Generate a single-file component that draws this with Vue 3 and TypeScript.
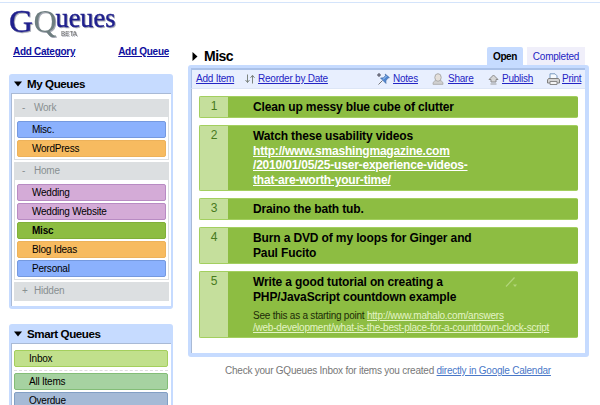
<script setup lang="ts">
interface Queue { name: string; tone: string; active?: boolean }
interface Category { name: string; open: boolean; queues: Queue[] }
interface Item { lines: string[]; link?: string[]; note?: string; noteLink?: string[] }

const categories: Category[] = [
  { name: 'Work', open: true, queues: [
    { name: 'Misc.', tone: 'blue' },
    { name: 'WordPress', tone: 'orange' },
  ] },
  { name: 'Home', open: true, queues: [
    { name: 'Wedding', tone: 'purple' },
    { name: 'Wedding Website', tone: 'purple' },
    { name: 'Misc', tone: 'green', active: true },
    { name: 'Blog Ideas', tone: 'orange' },
    { name: 'Personal', tone: 'blue' },
  ] },
  { name: 'Hidden', open: false, queues: [] },
]

const items: Item[] = [
  { lines: ['Clean up messy blue cube of clutter'] },
  { lines: ['Watch these usability videos'], link: ['http://www.smashingmagazine.com', '/2010/01/05/25-user-experience-videos-', 'that-are-worth-your-time/'] },
  { lines: ['Draino the bath tub.'] },
  { lines: ['Burn a DVD of my loops for Ginger and', 'Paul Fucito'] },
  { lines: ['Write a good tutorial on creating a', 'PHP/JavaScript countdown example'], note: 'See this as a starting point', noteLink: ['http://www.mahalo.com/answers', '/web-development/what-is-the-best-place-for-a-countdown-clock-script'] },
]
</script>

<template>
  <div class="page">
    <aside class="side">
      <svg class="logo" width="120" height="38" viewBox="0 0 120 38">
        <text class="gray" x="24.500" y="28.500" font-size="32" textLength="23" lengthAdjust="spacingAndGlyphs">Q</text>
        <text class="navy" x="0" y="28.500" font-size="32" textLength="24" lengthAdjust="spacingAndGlyphs">G</text>
        <text class="navy" x="46.500" y="23.500" font-size="27" textLength="60" lengthAdjust="spacingAndGlyphs">ueues</text>
        <text class="beta" x="52" y="33" font-size="6.800" textLength="16" lengthAdjust="spacingAndGlyphs">BETA</text>
      </svg>
      <nav class="adds"><a>Add Category</a><a>Add Queue</a></nav>
      <section class="panel mine">
        <h2><svg width="8" height="6" viewBox="0 0 8 6"><path d="M0 .5h8L4 5.5z" /></svg>My Queues</h2>
        <div class="panel-body">
          <div v-for="c in categories" :key="c.name" class="category">
            <div class="cat-head"><span>{{ c.open ? '-' : '+' }}</span>{{ c.name }}</div>
            <div v-if="c.open" class="queues">
              <div v-for="q in c.queues" :key="q.name" class="queue" :class="[q.tone, { active: q.active }]">{{ q.name }}</div>
            </div>
          </div>
        </div>
      </section>
      <section class="panel smart">
        <h2><svg width="8" height="6" viewBox="0 0 8 6"><path d="M0 .5h8L4 5.5z" /></svg>Smart Queues</h2>
        <div class="panel-body">
          <div class="queue lime">Inbox</div>
          <div class="dash"></div>
          <div class="queue mint">All Items</div>
          <div class="queue slate">Overdue</div>
        </div>
      </section>
    </aside>

    <main class="main">
      <header class="head">
        <svg class="tri" width="6" height="9" viewBox="0 0 6 9"><path d="M.5 0v9L5.500 4.500z" /></svg>
        <h1>Misc</h1>
        <div class="tabs"><span class="tab on">Open</span><span class="tab">Completed</span></div>
      </header>
      <section class="board">
        <div class="tools">
          <div class="tool add"><a>Add Item</a></div>
          <div class="tool sort">
            <svg width="10" height="10" viewBox="0 0 10 10" fill="none" stroke="#7d8580"><path d="M2.500 .5v8M.5 6l2 2.500 2-2.500M7.500 9.500v-8M5.500 3.800l2-2.500 2 2.500" /></svg>
            <a>Reorder by Date</a>
          </div>
          <div class="tool notes">
            <svg width="13" height="13" viewBox="0 0 13 13">
              <path d="M1.500 11.500l4-4" stroke="#777" fill="none" />
              <path d="M3.500 5l3-.2 2-2.300-.3-1.500 4.200 3.600-1.600.6-1.900 2.600.1 2.700z" fill="#4f86d2" stroke="#40689f" stroke-width=".6" />
              <path d="M6 6.500L9.500 3" stroke="#a8ccf4" />
              <path d="M2 0v4M0 2h4" stroke="#445" />
            </svg>
            <a>Notes</a>
          </div>
          <div class="tool share">
            <svg width="12" height="12" viewBox="0 0 12 12">
              <path d="M1 11.300c0-2.300 1-3.300 3-3.800h4c2 .5 3 1.500 3 3.800z" fill="#d0d0d0" stroke="#b0b0b0" />
              <ellipse cx="6" cy="4.500" rx="3.200" ry="3.800" fill="#e4dfda" stroke="#aaa" />
            </svg>
            <a>Share</a>
          </div>
          <div class="tool publish">
            <svg width="11" height="11" viewBox="0 0 11 11">
              <path d="M5.500 1L10 5.500H8v2.500H3V5.500H1z" fill="#d6d6d6" stroke="#8b8b8b" />
              <path d="M2.500 10h6" stroke="#999" />
            </svg>
            <a>Publish</a>
          </div>
          <div class="tool print">
            <svg width="13" height="12" viewBox="0 0 13 12">
              <path d="M3 6V.8h5l2 2V6" fill="#f7fbff" stroke="#7a9ac0" />
              <path d="M1.500 5.500h10l1 1.500v3h-12V7z" fill="#d4d4d4" stroke="#808080" />
              <path d="M3 8.500h7v3H3z" fill="#f4f4f4" stroke="#888" />
            </svg>
            <a>Print</a>
          </div>
        </div>
        <ol class="items">
          <li v-for="(it, n) in items" :key="n">
            <span class="num">{{ n + 1 }}</span>
            <div class="body">
              <div v-for="l in it.lines" :key="l">{{ l }}</div>
              <div v-for="l in it.link" :key="l" class="link"><a>{{ l }}</a></div>
              <div v-if="it.note" class="note">
                <div>{{ it.note }} <a>{{ it.noteLink?.[0] }}</a></div>
                <div><a>{{ it.noteLink?.[1] }}</a></div>
              </div>
            </div>
            <svg v-if="it.note" class="edit" width="13" height="12" viewBox="0 0 13 12"><path d="M1 10.500l8.500-9" stroke="#b3d67c" stroke-width="1.200" /><path d="M8 8.500h4l-2 2.500z" fill="#b3d67c" /></svg>
          </li>
        </ol>
      </section>
      <p class="hint">Check your GQueues Inbox for items you created <a>directly in Google Calendar</a></p>
    </main>
  </div>
</template>

<style>
body { overflow: hidden; background: #fff; }
</style>
<style scoped>
* { box-sizing: border-box; }
.page { width: 600px; height: 405px; overflow: hidden; display: flex; padding: 3px 9px 0; background: linear-gradient(#d4e4fb, #d4e4fb) 0 2px / 100% 1px no-repeat #fff; font-family: "Liberation Sans", Arial, sans-serif; font-size: 10px; letter-spacing: -.23px; color: #000; }
a { text-decoration: underline; color: #2424c4; }
.side { width: 164px; flex: none; }
.logo { display: block; letter-spacing: 0; font-family: "Liberation Serif", serif; filter: drop-shadow(1px 1px .5px #a5a8b4); }
.navy { fill: #20208e; stroke: #20208e; stroke-width: .4; }
.gray { fill: #6e7e80; }
.beta { font-family: "Liberation Sans", sans-serif; fill: #666; }
.adds { display: flex; justify-content: space-between; padding: 4px 4px 0; height: 33px; font-weight: bold; line-height: 14px; letter-spacing: -.28px; }
.adds a { color: #0e0e9e; }
.panel { background: #c6dbff; border-radius: 3px; padding: 0 2px 3px; }
.panel h2 { margin: 0; height: 19px; padding-left: 3px; display: flex; align-items: center; gap: 5px; font-size: 11.6px; letter-spacing: -.42px; font-weight: bold; }
.panel-body { background: #fff; border-top: 1px solid #a9bad6; border-left: 1px solid #a9bad6; }
.mine { height: 235px; }
.mine .panel-body { height: 213px; padding: 5px 2px 0; }
.category { border: 1px solid #dcdfe1; border-top: 0; margin-bottom: 2px; }
.category:last-child { margin-top: 1px; }
.cat-head { height: 18px; line-height: 18px; background: #dcdfe1; color: #899091; padding-left: 7px; display: flex; }
.cat-head span { width: 12px; }
.queues { padding: 4px 2px 2px; display: grid; gap: 2px; }
.queue { height: 17px; line-height: 15px; border: 1px solid; border-radius: 2px; padding-left: 14px; }
.blue { background: #8bb1fd; border-color: #7599df; }
.orange { background: #f7bb60; border-color: #edb25a; }
.purple { background: #d4abd7; border-color: #b88bc3; }
.green { background: #8dbd42; border-color: #80b038; }
.active { font-weight: bold; }
.smart { margin-top: 15px; height: 120px; }
.smart .panel-body { height: 100px; padding: 6px 3px 0 2px; }
.lime { background: #c1e08c; border-color: #a4cf5c; }
.mint { background: #a6d2a1; border-color: #83bd77; }
.slate { background: #a5bad6; border-color: #829fc4; margin-top: 2px; }
.dash { margin: 3px 0 2px; border-top: 1px dashed #ddd; }
.main { width: 401px; margin-left: 15px; flex: none; }
.head { height: 62px; padding: 44px 4px 0 4px; display: flex; }
.tri { margin: 5px 6px 0 0; }
h1 { margin: 0; font-size: 14px; line-height: 18px; letter-spacing: -.5px; }
.tabs { margin-left: auto; display: flex; gap: 4px; }
.tab { height: 18px; width: 58px; line-height: 19px; text-align: center; background: #f0effa; color: #2424c4; }
.tab.on { width: 36px; background: #c6dbff; color: #000; font-weight: bold; letter-spacing: -.4px; border-radius: 2px 2px 0 0; }
.board { height: 292px; background: #fff; border: 4px solid #c6dbff; border-width: 3px 4px 4px 3px; border-radius: 3px; }
.tools { height: 21px; border-top: 2px solid #aac1e8; border-left: 1px solid #aac1e8; border-bottom: 1px solid #dde6f6; background: #e8effe; display: flex; align-items: center; padding-left: 4px; line-height: 14px; }
.tool { display: flex; align-items: center; gap: 3px; white-space: nowrap; flex: none; }
.add { width: 49px; }
.sort { width: 132px; gap: 3px; }
.notes { width: 55px; }
.share { width: 56px; gap: 4px; }
.publish { width: 59px; }
.print { gap: 2px; }
.items { list-style: none; margin: 0; padding: 7px 7px 0; height: 264px; border-left: 1px solid #a9bad6; display: grid; gap: 7px; grid-template-rows: 22px 66px 22px 37px 67px; }
.items li { display: flex; position: relative; background: #8dbd42; border: 1px solid #a3cf5f; border-right-color: #8dbd42; border-radius: 2px; }
.num { width: 28px; flex: none; background: #c5df9c; color: #477a1d; font-size: 12px; line-height: 19px; text-align: center; }
.body { padding: 3px 0 0 25px; font-size: 12px; letter-spacing: -.13px; line-height: 14.7px; font-weight: bold; white-space: nowrap; }
.body a { color: #fff; }
.link { letter-spacing: -.2px; }
.note { font-size: 10px; font-weight: normal; line-height: 12px; letter-spacing: -.23px; margin-top: 6px; color: #1c2b08; }
.body .note a { color: #e4f4c6; }
.edit { position: absolute; left: 305px; top: 4px; }
.hint { margin: 7px 0 0 37px; color: #777; line-height: 14px; white-space: nowrap; }
.hint a { color: #4a78c8; }
</style>
